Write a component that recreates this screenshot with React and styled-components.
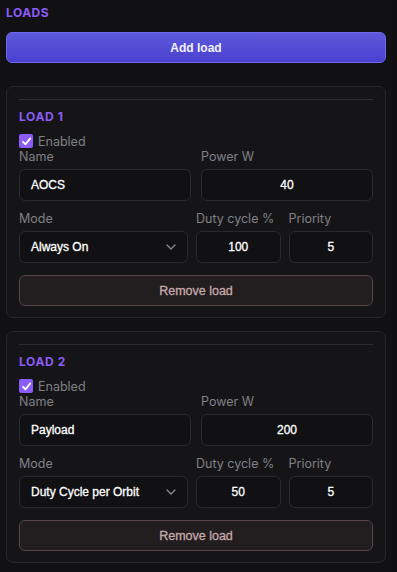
import React from "react";
import styled, { createGlobalStyle } from "styled-components";

const Global = createGlobalStyle`
  html, body { margin: 0; padding: 0; background: #0f0f12; }
  body { font-family: Inter, "Noto Sans", "Liberation Sans", sans-serif; -webkit-font-smoothing: antialiased; }
  * { box-sizing: border-box; }
`;

const Panel = styled.div`
  width: 392px;
  min-height: 572px;
  background: #111114;
  padding: 5px 6px 0 6px;
`;

const SectionTitle = styled.div`
  font-size: 12px;
  line-height: 16px;
  font-weight: 700;
  letter-spacing: 0.04em;
  color: #8b5cf6;
  text-transform: uppercase;
  margin-bottom: 11px;
`;

const AddButton = styled.button`
  display: block;
  width: 100%;
  height: 31px;
  border-radius: 6px;
  border: 1px solid #6f68ee;
  background: linear-gradient(180deg, #5d5ad9 0%, #4a40d2 100%);
  color: #f3f2ff;
  font-family: "Liberation Sans", Arial, sans-serif;
  font-size: 12px;
  font-weight: 700;
  margin-bottom: 23px;
  cursor: pointer;
`;

const Card = styled.div`
  border: 1px solid #27272b;
  border-radius: 7px;
  background: #151517;
  padding: 12px 12px 11px 12px;
  margin-bottom: 13px;
  display: flex;
  flex-direction: column;
`;

const Divider = styled.div`
  height: 1px;
  background: #2c2c30;
  margin-bottom: 9px;
`;

const CardTitle = styled.div`
  font-size: 12px;
  line-height: 16px;
  font-weight: 700;
  letter-spacing: 0.05em;
  color: #8b5cf6;
  margin-bottom: 8px;
`;

const CheckRow = styled.label`
  display: flex;
  align-items: center;
  height: 16px;
  gap: 5px;
  font-size: 12.5px;
  color: #808086;
`;

const CheckBox = styled.span`
  width: 14px;
  height: 14px;
  border-radius: 2px;
  background: #8b5cf6;
  display: flex;
  align-items: center;
  justify-content: center;
`;

const Grid = styled.div`
  display: grid;
  grid-template-columns: ${(p) => p.$cols};
  column-gap: ${(p) => p.$gap}px;
  margin-bottom: ${(p) => p.$mb}px;
`;

const Field = styled.div`
  display: flex;
  flex-direction: column;
  min-width: 0;
`;

const Label = styled.div`
  font-size: 12.5px;
  line-height: 16px;
  color: #808086;
  margin-bottom: 4px;
  white-space: nowrap;
`;

const Input = styled.div`
  height: 32px;
  border: 1px solid #2a2a2e;
  border-radius: 6px;
  background: #111113;
  color: #ffffff;
  font-family: "Liberation Sans", Arial, sans-serif;
  font-size: 12px;
  font-weight: 400;
  -webkit-text-stroke: 0.3px #ffffff;
  display: flex;
  align-items: center;
  justify-content: ${(p) => (p.$center ? "center" : "space-between")};
  padding: 0 11px 0 11px;
  white-space: nowrap;
`;

const RemoveButton = styled.button`
  width: 100%;
  height: 31px;
  border-radius: 6px;
  border: 1px solid #574445;
  background: #221e1f;
  color: #c7a9ac;
  font-family: "Liberation Sans", Arial, sans-serif;
  font-size: 12.5px;
  font-weight: 400;
  -webkit-text-stroke: 0.3px #c7a9ac;
  cursor: pointer;
`;

const Check = () => (
  <svg width="11" height="11" viewBox="0 0 12 12">
    <path d="M2.2 6.3 L4.9 9 L9.9 2.8" fill="none" stroke="#fff" strokeWidth="2" strokeLinecap="round" strokeLinejoin="round" />
  </svg>
);

const Chevron = () => (
  <svg width="10" height="6" viewBox="0 0 10 6">
    <path d="M1 1 L5 5 L9 1" fill="none" stroke="#8a8a90" strokeWidth="1.3" strokeLinecap="round" strokeLinejoin="round" />
  </svg>
);

const loads = [
  { name: "AOCS", power: "40", mode: "Always On", duty: "100", priority: "5" },
  { name: "Payload", power: "200", mode: "Duty Cycle per Orbit", duty: "50", priority: "5" },
];

const LoadCard = ({ idx, load }) => (
  <Card>
    <Divider />
    <CardTitle>LOAD {idx}</CardTitle>
    <CheckRow>
      <CheckBox><Check /></CheckBox>
      Enabled
    </CheckRow>
    <Grid $cols="1fr 1fr" $gap={10} $mb={10}>
      <Field>
        <Label>Name</Label>
        <Input>{load.name}</Input>
      </Field>
      <Field>
        <Label>Power W</Label>
        <Input $center>{load.power}</Input>
      </Field>
    </Grid>
    <Grid $cols="2fr 1fr 1fr" $gap={8} $mb={12}>
      <Field>
        <Label>Mode</Label>
        <Input>
          <span>{load.mode}</span>
          <Chevron />
        </Input>
      </Field>
      <Field>
        <Label>Duty cycle %</Label>
        <Input $center>{load.duty}</Input>
      </Field>
      <Field>
        <Label>Priority</Label>
        <Input $center>{load.priority}</Input>
      </Field>
    </Grid>
    <RemoveButton>Remove load</RemoveButton>
  </Card>
);

export default function App() {
  return (
    <>
      <Global />
      <Panel>
        <SectionTitle>Loads</SectionTitle>
        <AddButton>Add load</AddButton>
        {loads.map((l, i) => (
          <LoadCard key={i} idx={i + 1} load={l} />
        ))}
      </Panel>
    </>
  );
}
